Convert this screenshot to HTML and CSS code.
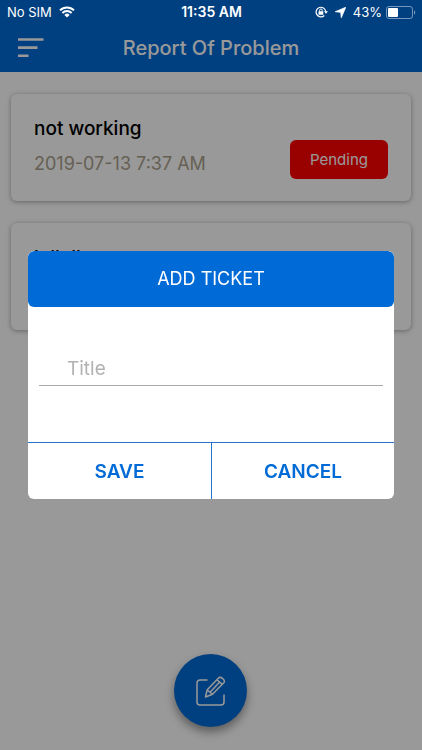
FILE: index.html
```html
<!DOCTYPE html>
<html lang="en">
<head>
<meta charset="utf-8">
<meta name="viewport" content="width=device-width, initial-scale=1">
<title>Report Of Problem</title>
<link rel="stylesheet" href="styles.css">
</head>
<body>
<div class="status">
  <div class="status-side">
    <span>No SIM</span>
    <svg class="wifi" viewBox="0 0 16 12" width="16" height="12" aria-hidden="true"><path d="M1 4.400a10 10 0 0 1 14 0M3.400 7a6.500 6.500 0 0 1 9.200 0" fill="none" stroke="currentColor" stroke-width="2"/><path d="M8 11.500 5.400 8.900a3.700 3.700 0 0 1 5.200 0z" fill="currentColor"/></svg>
  </div>
  <span class="clock">11:35 AM</span>
  <div class="status-side status-end">
    <svg viewBox="0 0 13 12" width="13" height="12" aria-hidden="true"><path d="M10.700 5.500A4.800 4.800 0 1 0 9.300 9.500" fill="none" stroke="currentColor" stroke-width="1.200"/><path d="M9 5.200h4l-2 2.600zM3.500 5.300h4.800v3.500H3.500z" fill="currentColor"/><path d="M4.600 5.500V4.300a1.300 1.300 0 0 1 2.600 0v1.200" fill="none" stroke="currentColor"/></svg>
    <svg class="arrow" viewBox="0 0 11 11" width="11" height="11" aria-hidden="true"><path d="M10.700.3 6.300 10.700 5.700 5.300.3 4.700z" fill="currentColor" stroke="currentColor" stroke-width=".8" stroke-linejoin="round"/></svg>
    <span>43%</span>
    <svg viewBox="0 0 30 13" width="30" height="13" aria-hidden="true"><rect x=".5" y=".5" width="26" height="12" rx="2.500" fill="none" stroke="#7297bb"/><rect x="2" y="2" width="10" height="9" rx="1" fill="currentColor"/><path d="M28 4.500c1.700.5 1.700 3.500 0 4z" fill="#7297bb"/></svg>
  </div>
</div>
<header class="bar">
  <button class="menu" aria-label="Menu"><svg viewBox="0 0 26 20" width="26" height="20" aria-hidden="true"><path d="M0 1.500h25.500M0 9.600h19.500M0 17.700h10.500" stroke="currentColor" stroke-width="2.600"/></svg></button>
  <h1>Report Of Problem</h1>
</header>
<main class="list">
  <article class="card">
    <div><h2>not working</h2><time datetime="2019-07-13T07:37">2019-07-13 7:37 AM</time></div>
    <span class="tag">Pending</span>
  </article>
  <article class="card"><div><h2>lolloll</h2></div></article>
</main>
<button class="compose" aria-label="Add ticket"><svg viewBox="0 0 30 30" width="30" height="30" fill="none" stroke="currentColor" stroke-width="1.500" stroke-linejoin="round" aria-hidden="true"><path d="M11.500 4H4a3 3 0 0 0-3 3v19a3 3 0 0 0 3 3h21a3 3 0 0 0 3-3v-7.500"/><path d="m9.500 21 1.600-7L22.500 2.100c2-2.200 7.500 2 5.300 4.700L16.500 18.200z"/><path d="m11.100 14 5.400 4.200M21 3.800l5.300 4.600M14 16.200 23.500 6.200"/></svg></button>
<div class="overlay">
  <form class="dialog" role="dialog" aria-modal="true" aria-labelledby="dialog-title">
    <h2 class="dialog-title" id="dialog-title">ADD TICKET</h2>
    <div class="field"><input type="text" placeholder="Title" aria-label="Title"></div>
    <div class="actions"><button type="button">SAVE</button><button type="button">CANCEL</button></div>
  </form>
</div>
</body>
</html>
```
FILE: styles.css
```css
* { box-sizing: border-box; }
body {
  margin: 0;
  min-height: 100vh;
  background: #fff;
  color: #000;
  font-family: Inter, "Liberation Sans", sans-serif;
}
h1, h2 { margin: 0; font-weight: 500; }
button { border: 0; padding: 0; background: none; font: inherit; color: inherit; }
svg { display: block; }

.status {
  position: sticky;
  top: 0;
  z-index: 3;
  display: grid;
  grid-template-columns: 1fr auto 1fr;
  align-items: center;
  height: 24px;
  padding: 0 6px 0 7px;
  background: #004080;
  color: #fff;
  font-size: 13px;
  line-height: 24px;
}
.status-side { display: flex; align-items: center; gap: 7px; }
.status-end { justify-content: flex-end; gap: 4px; }
.arrow { margin: 0 3px; }
.clock { font-size: 14px; font-weight: 600; }

.bar {
  display: grid;
  grid-template-columns: 26px 1fr 26px;
  align-items: center;
  height: 48px;
  padding: 0 18px;
  background: #006bd6;
  color: #fff;
}
.menu { width: 26px; height: 20px; }
.bar h1 { font-size: 20px; line-height: 24px; text-align: center; }

.list { display: grid; gap: 22px; padding: 22px 11px; }
.card {
  display: flex;
  justify-content: space-between;
  align-items: flex-start;
  min-height: 107px;
  padding: 22px 23px;
  border-radius: 6px;
  background: #fff;
  box-shadow: 0 1px 5px rgba(0, 0, 0, .35);
}
.card h2 { font-size: 19px; line-height: 26px; }
.card time { display: block; margin-top: 9px; color: #aaa18c; font-size: 18px; line-height: 26px; }
.tag {
  align-self: flex-end;
  padding: 0 20px;
  border-radius: 6px;
  background: #f00;
  color: #fff;
  font-size: 15px;
  line-height: 39px;
}

.compose {
  position: fixed;
  bottom: 23px;
  left: calc(50% - 37px);
  display: grid;
  place-items: center;
  width: 73px;
  height: 73px;
  border-radius: 50%;
  background: #006bd6;
  color: #fff;
  box-shadow: 0 5px 10px rgba(0, 0, 0, .4);
}

.overlay {
  position: fixed;
  inset: 0;
  z-index: 2;
  display: grid;
  place-items: center;
  padding: 0 28px;
  background: rgba(0, 0, 0, .4);
}
.dialog { width: 100%; overflow: hidden; border-radius: 6px; background: #fff; }
.dialog-title {
  border-radius: 6px;
  background: #006bd6;
  color: #fff;
  font-size: 18px;
  font-weight: 400;
  line-height: 56px;
  text-align: center;
}
.field { padding: 44px 11px 56px; }
.field input {
  display: block;
  width: 100%;
  height: 35px;
  padding: 0 28px;
  border: 0;
  border-bottom: 1px solid #aaa;
  border-radius: 0;
  outline: 0;
  background: none;
  font: inherit;
  font-size: 19px;
}
.field input::placeholder { color: #b2b2b2; }
.actions { display: grid; grid-template-columns: 1fr 1fr; border-top: 1px solid #2674cc; }
.actions button { height: 56px; color: #006bd6; font-size: 19px; font-weight: 600; }
.actions button + button { border-left: 1px solid #2674cc; }
```
